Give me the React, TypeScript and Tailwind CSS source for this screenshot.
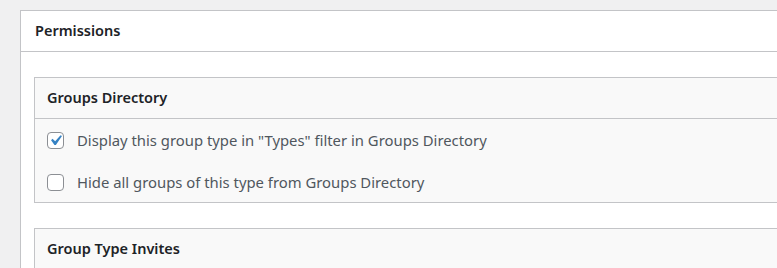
const Box = ({ title, children }: { title: string; children?: React.ReactNode }) => {
    return (
        <div className="border border-[#c3c4c7] bg-[#f9f9f9]">
            <div className="h-[41px] flex items-center px-3 border-b border-[#c3c4c7] text-[14.5px] font-semibold text-[#1d2327]">
                {title}
            </div>
            {children}
        </div>
    )
}

const Row = ({ label, checked }: { label: string; checked?: boolean }) => {
    return (
        <label className="flex items-center h-[42px] pl-3 gap-[13px] text-[14.85px] text-[#50575e]">
            <span className="w-[17px] h-[17px] shrink-0 rounded-[4px] border border-[#8c8f94] bg-white flex items-center justify-center">
                {checked && (
                    <svg viewBox="0 0 20 20" className="w-[21px] h-[21px] shrink-0">
                        <path d="M14.83 4.89l1.34.94-5.81 8.38H9.02L5.78 9.67l1.34-1.250 2.57 2.4z" fill="#3582c4" />
                    </svg>
                )}
            </span>
            {label}
        </label>
    )
}

export default function App() {
    return (
        <div className="w-[777px] h-[268px] overflow-hidden bg-[#f0f0f1] pt-[10px] pl-[20px] font-['Noto_Sans',sans-serif]">
            <div className="w-[800px] border border-[#c3c4c7] bg-white">
                <div className="h-[41px] flex items-center px-[14px] border-b border-[#c3c4c7] text-[14.5px] font-semibold text-[#1d2327]">
                    Permissions
                </div>
                <div className="pl-[13px] pt-[25px] flex flex-col gap-[25px]">
                    <Box title="Groups Directory">
                        <div className="-mb-[1px]">
                            <Row checked label={'Display this group type in "Types" filter in Groups Directory'} />
                            <Row label="Hide all groups of this type from Groups Directory" />
                        </div>
                    </Box>
                    <Box title="Group Type Invites" />
                </div>
            </div>
        </div>
    )
}
